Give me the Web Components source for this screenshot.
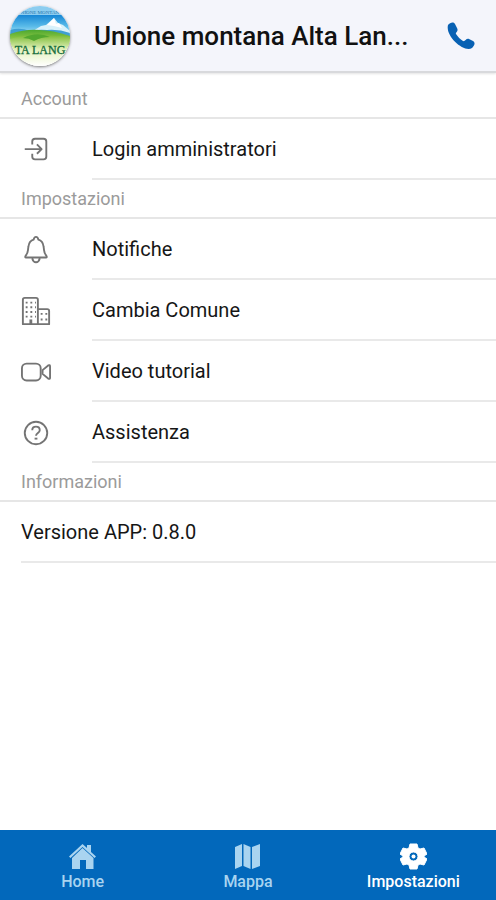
<!DOCTYPE html>
<html lang="it">
<head>
<meta charset="utf-8">
<meta name="viewport" content="width=device-width, initial-scale=1">
<title>Impostazioni</title>
<style>
  body { margin: 0; background: #fff; color: #161616; font-family: Roboto, "Liberation Sans", sans-serif; }
</style>
</head>
<body>
<settings-page></settings-page>
<script>
const define = (name, html) => {
  const template = document.createElement('template');
  template.innerHTML = html;
  customElements.define(name, class extends HTMLElement {
    constructor() {
      super();
      this.attachShadow({ mode: 'open' }).append(template.content.cloneNode(true));
    }
  });
};

const icons = {
  login: '<path d="M12 10V7q0-3 3-3h9q3 0 3 3v16q0 3-3 3h-9q-3 0-3-3v-3M4 15h18M17 10l5 5-5 5"/>',
  bell: '<path d="M5 24q-1 0 0-2c3-3 2-5 3-10 .500-4 2-6 5.500-7Q14 2 16 2t2.500 3c3.500 1 5 3 5.500 7 1 5 0 7 3 10q1 2 0 2zM12 25q1 4 4 4t4-4"/>',
  building: '<path d="M2 30V4q0-2 2-2h12q2 0 2 2v26zM18 14h10q2 0 2 2v14H18"/><path fill="#747474" stroke="none" d="M9 25h3v5H9z"/><path stroke-width="2" stroke-dasharray="2 3" d="M5 7h11M5 12h11M5 17h11M5 22h11M21 19h7M21 25h7"/>',
  video: '<rect x="1" y="7" width="20" height="18" rx="5"/><path d="m23 14 6-5q2-1 2 1v12q0 2-2 1l-6-5z"/>',
  help: '<circle cx="16" cy="16" r="12"/><path d="M12 13c0-5 8-5 8 0 0 3-4 3-4 6"/><path stroke-width="3" d="M16 21v2"/>'
};

class LineIcon extends HTMLElement {
  connectedCallback() {
    if (this.shadowRoot) return;
    this.attachShadow({ mode: 'open' }).innerHTML = `
      <style>
        :host { display: block; width: 30px; height: 30px; }
        svg { display: block; width: 100%; height: 100%; fill: none; stroke: #747474; stroke-width: 2; stroke-linejoin: round; }
      </style>
      <svg viewBox="0 0 32 32" aria-hidden="true">${icons[this.getAttribute('name')]}</svg>`;
  }
}
customElements.define('line-icon', LineIcon);

define('town-logo', `
  <style>
    :host { display: block; width: 60px; height: 60px; border-radius: 50%; overflow: hidden; box-shadow: 0 1px 3px #777; }
    svg { display: block; }
    text { font-family: "Liberation Serif", serif; }
  </style>
  <svg width="60" height="60" viewBox="0 0 60 60" role="img" aria-label="Alta Langa">
    <defs>
      <linearGradient id="sky" x2="0" y2="1"><stop stop-color="#1686d5"/><stop offset=".5" stop-color="#5bbce9"/><stop offset="1" stop-color="#d6f2fb"/></linearGradient>
      <linearGradient id="hill" x2="0" y2="1"><stop stop-color="#4ca72f"/><stop offset="1" stop-color="#c2df55"/></linearGradient>
      <linearGradient id="field" x2="0" y2="1"><stop stop-color="#7dbc38"/><stop offset=".45" stop-color="#e3f1bb"/><stop offset="1" stop-color="#fff"/></linearGradient>
    </defs>
    <path fill="#fff" d="M0 0h60v60H0z"/>
    <path fill="#8ccdf0" d="M0 0h60v9H0z"/>
    <path fill="url(#sky)" d="M0 9h60v23H0z"/>
    <path fill="#d8f1fa" d="m23 25 8-5 5-1 8-7 4 5 5 2 7 6v5H23z"/>
    <path fill="#fff" d="m37 19 7-7 2 6 3-1 3 5-8-2z"/>
    <path fill="#3f9fd3" d="M0 24q10-3 20 1 9-2 17-1 12-1 23 3v6H0z"/>
    <path fill="url(#hill)" d="M0 28q16-5 29-4 14 0 31 6v10H0z"/>
    <path fill="url(#field)" d="M0 33q14-5 25-2 16-3 35 0v29H0z"/>
    <path fill="#52a82f" d="M13 32q14-7 27-1-9 0-16 4-5-3-11-3"/>
    <text x="30" y="8" text-anchor="middle" font-size="5" fill="#2575ae">NIONE MONTAN</text>
    <text x="30" y="48" text-anchor="middle" font-size="12" font-weight="400" fill="#126b3b" stroke="#126b3b" stroke-width=".3">TA LANG</text>
  </svg>`);

define('app-header', `
  <style>
    :host { display: flex; align-items: center; gap: 24px; box-sizing: border-box; min-height: 73px; padding: 0 20px 0 10px; background: #f4f5fb; border-bottom: 2px solid #d8d9dc; box-shadow: 0 1px 2px #e4e4e4; }
    h1 { flex: 1; min-width: 0; margin: 0; overflow: hidden; font-size: 26px; font-weight: 500; line-height: 30px; white-space: nowrap; text-overflow: ellipsis; color: #111; }
    button { flex: none; display: grid; place-items: center; width: 30px; height: 40px; padding: 0; border: 0; background: none; }
    svg { width: 28px; height: 28px; fill: #0861b3; }
  </style>
  <town-logo></town-logo>
  <h1><slot></slot></h1>
  <button type="button" aria-label="Chiama">
    <svg viewBox="0 0 28 28"><path d="M1 3C3 1 6-1 8 2l2 4c2 4-2 4-1 6 2 3 4 5 7 7 2 1 3-3 6-2l4 2c3 2 1 5-1 7-8 5-27-12-24-23"/></svg>
  </button>`);

define('settings-section', `
  <style>
    :host { display: block; }
    h2 { margin: 0; padding: 7px 21px 6px; border-bottom: 2px solid #e6e6e6; font-size: 18px; font-weight: 400; line-height: 24px; color: #9b9b9b; }
  </style>
  <section><h2><slot name="title"></slot></h2><slot></slot></section>`);

define('settings-row', `
  <style>
    :host { display: block; }
    button { display: flex; align-items: center; width: 100%; padding: 0 0 0 21px; border: 0; background: none; font: inherit; color: inherit; text-align: left; }
    ::slotted(line-icon) { flex: none; margin-right: 41px; }
    span { flex: 1; padding: 18px 21px 17px 0; border-bottom: 2px solid #e9e9e9; font-size: 20px; line-height: 24px; }
  </style>
  <button type="button"><slot name="icon"></slot><span><slot></slot></span></button>`);

define('settings-info', `
  <style>
    :host { display: block; padding-left: 21px; }
    p { margin: 0; padding: 18px 21px 17px 0; border-bottom: 2px solid #e9e9e9; font-size: 20px; line-height: 24px; }
  </style>
  <p><slot></slot></p>`);

define('tab-link', `
  <style>
    :host { display: block; flex: 1; color: #a9d4f0; }
    :host([active]) { color: #fff; }
    a { display: flex; flex-direction: column; align-items: center; gap: 2px; padding: 13px 0 8px; color: inherit; text-decoration: none; font-size: 16px; font-weight: 500; line-height: 20px; }
  </style>
  <a href="#"><slot name="icon"></slot><slot></slot></a>`);

define('tab-bar', `
  <style>
    :host { display: block; background: #0268bb; }
    nav { display: flex; min-height: 70px; }
    svg { display: block; width: 27px; height: 27px; fill: currentColor; }
  </style>
  <nav>
    <tab-link><svg slot="icon" viewBox="0 0 27 27"><path d="M13.500 1 18 5V2h4v7l5 4.500-1.500 1.500L13.500 4 1.500 15 0 13.500z"/><path d="m13.500 5 11 10v11H17v-9h-6v9H3V15z"/></svg>Home</tab-link>
    <tab-link><svg slot="icon" viewBox="0 0 27 27"><path d="m1 4 7-3v22l-7 3zM9.500 1l7 3v22l-7-3zM18 4l8-3v22l-8 3z"/></svg>Mappa</tab-link>
    <tab-link active><svg slot="icon" viewBox="0 0 27 27"><path fill-rule="evenodd" stroke="currentColor" stroke-linejoin="round" d="M10 1h7l1 4 2 1 4-1 3 6-3 2v1l3 2-3 6-4-1-2 1-1 4h-7l-1-4-2-1-4 1-3-6 3-2v-1l-3-2 3-6 4 1 2-1zM13.500 9a4.500 4.500 0 1 0 0 9 4.500 4.500 0 0 0 0-9"/><circle cx="13.500" cy="13.500" r="2"/></svg>Impostazioni</tab-link>
  </nav>`);

define('settings-page', `
  <style>
    :host { display: flex; flex-direction: column; min-height: 100vh; }
    main { flex: 1; padding-top: 7px; }
  </style>
  <app-header>Unione montana Alta Lan...</app-header>
  <main>
    <settings-section>
      <span slot="title">Account</span>
      <settings-row><line-icon slot="icon" name="login"></line-icon>Login amministratori</settings-row>
    </settings-section>
    <settings-section>
      <span slot="title">Impostazioni</span>
      <settings-row><line-icon slot="icon" name="bell"></line-icon>Notifiche</settings-row>
      <settings-row><line-icon slot="icon" name="building"></line-icon>Cambia Comune</settings-row>
      <settings-row><line-icon slot="icon" name="video"></line-icon>Video tutorial</settings-row>
      <settings-row><line-icon slot="icon" name="help"></line-icon>Assistenza</settings-row>
    </settings-section>
    <settings-section>
      <span slot="title">Informazioni</span>
      <settings-info>Versione APP: 0.8.0</settings-info>
    </settings-section>
  </main>
  <tab-bar></tab-bar>`);
</script>
</body>
</html>
